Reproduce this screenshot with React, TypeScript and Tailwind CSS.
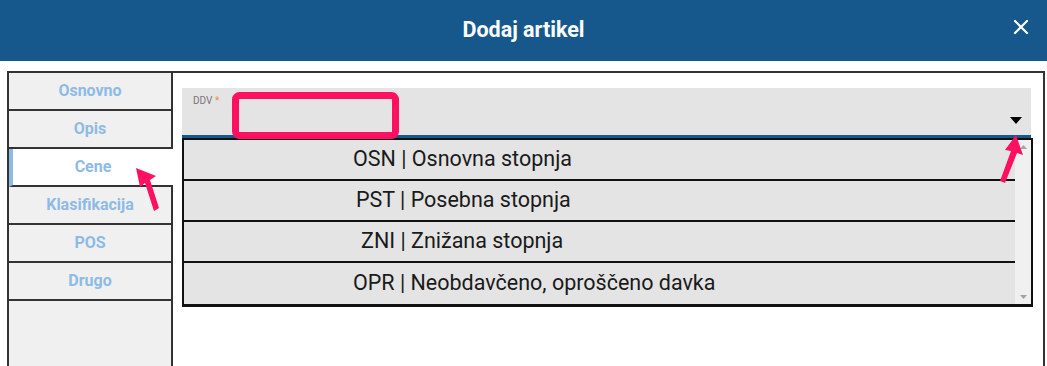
import { X } from "lucide-react";

const tabs = ["Osnovno", "Opis", "Cene", "Klasifikacija", "POS", "Drugo"];

const options = [
  { code: "OSN", name: "Osnovna stopnja", pad: "pl-[169px]" },
  { code: "PST", name: "Posebna stopnja", pad: "pl-[172px]" },
  { code: "ZNI", name: "Znižana stopnja", pad: "pl-[177px]" },
  { code: "OPR", name: "Neobdavčeno, oproščeno davka", pad: "pl-[169px]" },
];

export default function App() {
  return (
    <div className="relative h-[366px] w-[1047px] overflow-hidden bg-white font-['Roboto',sans-serif]">
      {/* Header */}
      <div className="relative flex h-[61px] items-center justify-center bg-[#16588c]">
        <h1 className="text-[21.5px] font-bold text-white">Dodaj artikel</h1>
        <X className="absolute right-[14px] top-[15px] h-[24px] w-[24px] text-white" strokeWidth={2.2} />
      </div>

      <div className="pt-[10px] pl-[7px] pr-[2px]">
        <div className="flex h-[300px] border-2 border-b-0 border-[#333]">
          {/* Side tabs */}
          <div className="flex w-[164px] flex-col bg-[#f0f0f0]">
            {tabs.map((t) => {
              const active = t === "Cene";
              return (
                <div
                  key={t}
                  className={
                    active
                      ? "flex h-[38px] items-center justify-center border-b-2 border-l-4 border-[#333] border-l-[#8fbbe3] bg-white text-[16px] font-bold text-[#8dbbe6]"
                      : "flex h-[38px] items-center justify-center border-r-2 border-b-2 border-[#333] text-[16px] font-bold text-[#8dbbe6]"
                  }
                >
                  {t}
                </div>
              );
            })}
            <div className="flex-1 border-r-2 border-[#333]" />
          </div>

          {/* Content */}
          <div className="flex-1 pl-[9px] pt-[15px]">
            <div className="relative h-[50px] w-[849px] border-b-[3px] border-[#16588c] bg-[#e4e4e4]">
              <span className="absolute left-[11px] top-[5px] text-[10px] text-[#777]">
                DDV <span className="text-[#f08a4b]">*</span>
              </span>
              <svg className="absolute right-[9px] top-[29px]" width="12" height="7" viewBox="0 0 12 7">
                <path d="M0 0h12L6 7z" fill="#000" />
              </svg>
            </div>

            <div className="flex w-[851px] border-2 border-b-[3px] border-[#111] bg-[#e4e4e4]">
              <div className="flex-1">
                {options.map((o, i) => (
                  <div
                    key={o.code}
                    className={`flex h-[41px] items-center ${o.pad} text-[21.5px] text-[#1a1a1a] ${i < options.length - 1 ? "border-b-2 border-[#111]" : ""}`}
                  >
                    {o.code} | {o.name}
                  </div>
                ))}
              </div>
              <div className="flex w-[16px] flex-col items-center justify-between bg-[#f0f0f0] py-[5px]">
                <svg width="7" height="4" viewBox="0 0 7 4">
                  <path d="M0 4h7L3.5 0z" fill="#a3a3a3" />
                </svg>
                <svg width="7" height="4" viewBox="0 0 7 4">
                  <path d="M0 0h7L3.5 4z" fill="#a3a3a3" />
                </svg>
              </div>
            </div>
          </div>
        </div>
      </div>

      {/* Annotations */}
      <svg className="pointer-events-none absolute left-0 top-0" width="1047" height="366">
        <rect x="235.5" y="95.5" width="160" height="40" rx="4" fill="none" stroke="#ff1060" strokeWidth="7" />
        <path d="M136 168 L156 176 L150 180 L159 208 L154 211 L145 183 L140 187 Z" fill="#ff1060" />
        <path d="M1016 135 L1023 155 L1017 153 L1005 183 L1000 181 L1011 151 L1005 150 Z" fill="#ff1060" />
      </svg>
    </div>
  );
}
